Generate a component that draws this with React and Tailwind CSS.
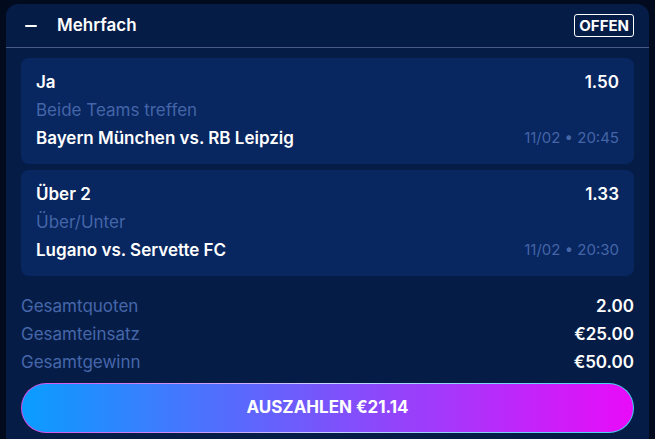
import React from "react";

const selections = [
  { pick: "Ja", market: "Beide Teams treffen", match: "Bayern München vs. RB Leipzig", odds: "1.50", date: "11/02 • 20:45" },
  { pick: "Über 2", market: "Über/Unter", match: "Lugano vs. Servette FC", odds: "1.33", date: "11/02 • 20:30" },
];

const totals = [
  ["Gesamtquoten", "2.00"],
  ["Gesamteinsatz", "€25.00"],
  ["Gesamtgewinn", "€50.00"],
];

const App = () => {
  return (
    <div className="min-h-screen bg-[#020a1e] px-[6px] pt-[4px] font-['Inter',sans-serif]">
      <div className="h-[435px] overflow-hidden rounded-t-xl bg-[#051c47]">
        {/* header */}
        <div className="flex h-[44px] items-center justify-between border-b border-[#4a5a86] pl-[19px] pr-[15px]">
          <div className="flex items-center gap-[20px]">
            <span className="block h-[2px] w-[12px] rounded bg-white" />
            <span className="text-[17px] font-semibold text-white">Mehrfach</span>
          </div>
          <span className="rounded-[3px] border border-white px-[4px] text-[15px] font-bold leading-[21px] text-white">OFFEN</span>
        </div>

        <div className="px-[15px] pt-[10px]">
          <div className="flex flex-col gap-[6px]">
            {selections.map((s) => (
              <div key={s.match} className="rounded-lg bg-[#08265f] px-[15px] pt-[10px] pb-[12px]">
                <div className="flex items-center justify-between">
                  <span className="text-[17px] font-semibold leading-7 text-white">{s.pick}</span>
                  <span className="text-[17px] font-semibold leading-7 text-white">{s.odds}</span>
                </div>
                <div className="text-[17px] leading-7 text-[#4465a8]">{s.market}</div>
                <div className="flex items-center justify-between">
                  <span className="text-[17px] font-semibold leading-7 text-white">{s.match}</span>
                  <span className="text-[15px] leading-7 text-[#4465a8]">{s.date}</span>
                </div>
              </div>
            ))}
          </div>

          <div className="mt-[16px]">
            {totals.map(([label, value]) => (
              <div key={label} className="flex items-center justify-between">
                <span className="text-[17px] leading-7 text-[#4667aa]">{label}</span>
                <span className="text-[17px] font-semibold leading-7 text-white">{value}</span>
              </div>
            ))}
          </div>

          <div className="mt-[7px] rounded-full bg-[linear-gradient(to_right,#d44ee8,#c8d4ff,#3fd0f0)] p-px">
            <button
              type="button"
              className="flex h-[48px] w-full items-center justify-center rounded-full bg-[linear-gradient(to_right,#0a9dff,#e90bf8)] text-[17px] font-bold text-white"
            >
              AUSZAHLEN €21.14
            </button>
          </div>
        </div>
      </div>
    </div>
  );
};

export default App;
